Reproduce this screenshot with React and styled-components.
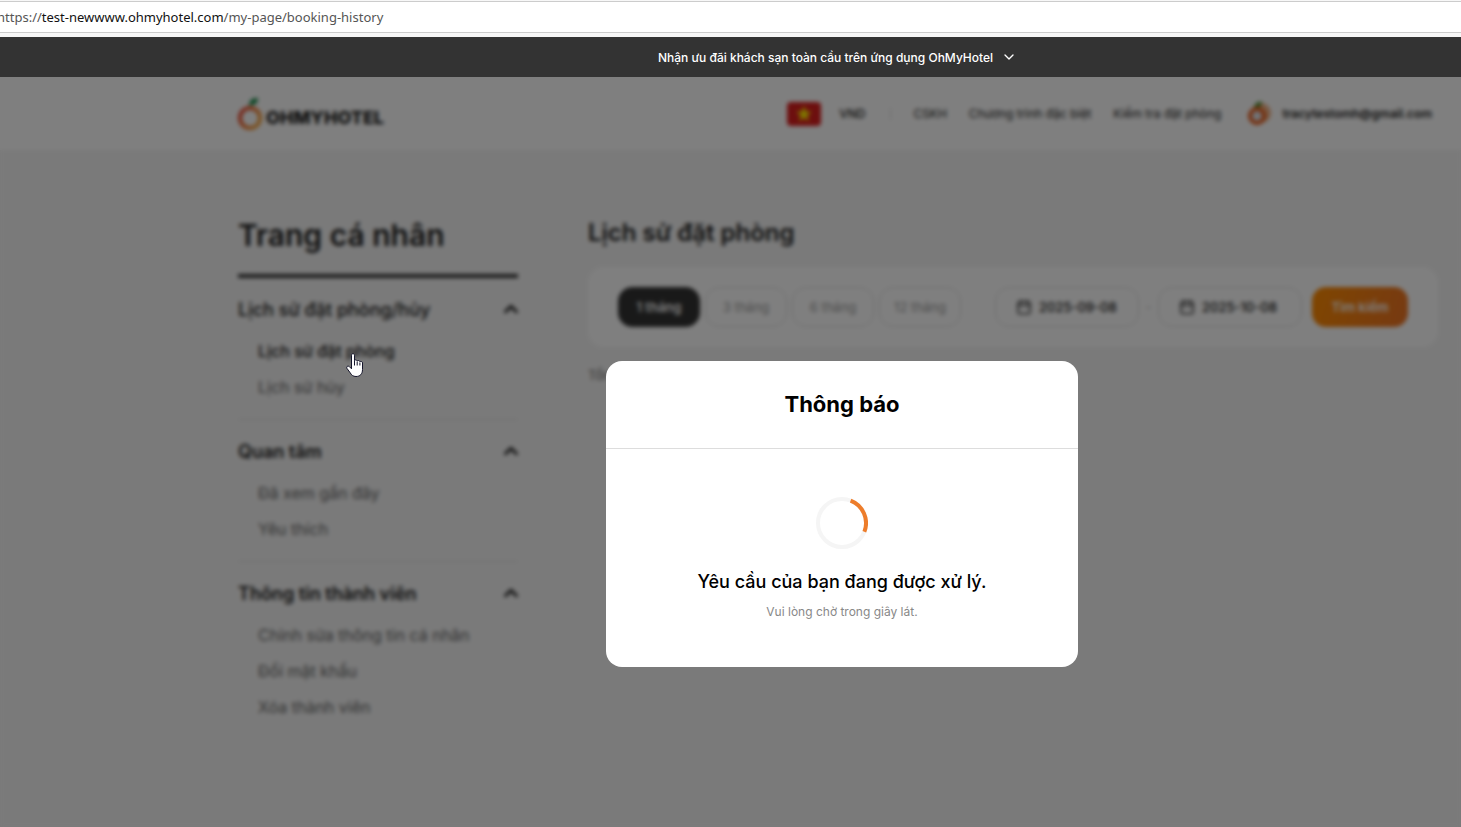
import React from 'react';
import styled, { createGlobalStyle } from "styled-components"
import { Calendar, ChevronDown, ChevronUp } from 'lucide-react'

const periods = ['1 tháng', '3 tháng', '6 tháng', '12 tháng'];

const groups = [
    { title: 'Lịch sử đặt phòng/hủy', items: ['Lịch sử đặt phòng', 'Lịch sử hủy'], open: true },
    { title: 'Quan tâm', items: ['Đã xem gần đây', 'Yêu thích'] },
    { title: 'Thông tin thành viên', items: ['Chỉnh sửa thông tin cá nhân', 'Đổi mật khẩu', 'Xóa thành viên'] },
];

const Logo = () => (
    <svg width="26" height="34" viewBox="0 0 26 34" aria-hidden="true">
        <defs>
            <linearGradient id="ring" x1="0" y1="0" x2="1" y2="0.6">
                <stop offset="0" stopColor="#e8382f" />
                <stop offset="0.55" stopColor="#f0702a" />
                <stop offset="1" stopColor="#f5a23a" />
            </linearGradient>
        </defs>
        <circle cx="12" cy="21" r="10" fill="none" stroke="url(#ring)" strokeWidth="4" />
        <path d="M11 9c0-5 3-8 9-8 0 5-3 7-7 7z" fill="#168a45" />
    </svg>
);

const Avatar = () => (
    <svg width="24" height="26" viewBox="0 0 24 26" aria-hidden="true">
        <circle cx="14" cy="12" r="10" fill="#f0b083" />
        <circle cx="10" cy="15" r="7" fill="#e4e8ee" stroke="#ea5b18" strokeWidth="4" />
        <path d="M7 6c1-4 4-6 8-5 0 4-3 6-8 5z" fill="#4f8a2c" />
    </svg>
);

const Flag = () => (
    <svg width="34" height="24" viewBox="0 0 34 24" aria-hidden="true">
        <rect width="34" height="24" rx="4" fill="#da1e1e" />
        <path d="M17 5l1.700 5.100h5.300l-4.300 3.200 1.600 5.200-4.300-3.200-4.300 3.200 1.600-5.200-4.300-3.200h5.300z" fill="#ffee00" stroke="#ffee00" />
    </svg>
);

const Spinner = () => (
    <svg width="52" height="52" viewBox="0 0 52 52" role="img" aria-label="loading">
        <circle cx="26" cy="26" r="24" fill="none" stroke="#f5f5f5" strokeWidth="4" />
        <circle
            cx="26"
            cy="26"
            r="24"
            fill="none"
            stroke="#ed7d2b"
            strokeWidth="4"
            strokeDasharray="37.700 113.100"
            transform="rotate(-69 26 26)"
        />
    </svg>
);

const App = () => {
    return (
        <Wrapper>
            <GlobalStyle />
            <AddressBar>
                <Address>https://<b>test-newwww.ohmyhotel.com</b>/my-page/booking-history</Address>
            </AddressBar>
            <Banner>
                Nhận ưu đãi khách sạn toàn cầu trên ứng dụng OhMyHotel
                <ChevronDown size={16} strokeWidth={2} />
            </Banner>

            <Stage>
                <Header>
                    <Brand href="#">
                        <Logo />
                        <span>OHMYHOTEL</span>
                    </Brand>
                    <Nav>
                        <Currency type="button"><Flag />VND</Currency>
                        <Separator />
                        <Links>
                            <a href="#">CSKH</a>
                            <a href="#">Chương trình đặc biệt</a>
                            <a href="#">Kiểm tra đặt phòng</a>
                        </Links>
                        <Account href="#"><Avatar />tracytestomh@gmail.com</Account>
                    </Nav>
                </Header>

                <Main>
                    <Sidebar>
                        <PageTitle>Trang cá nhân</PageTitle>
                        {groups.map((group) => (
                            <Group key={group.title}>
                                <GroupButton type="button" $light={group.open}>
                                    {group.title}
                                    <ChevronUp size={22} strokeWidth={3} />
                                </GroupButton>
                                <ul>
                                    {group.items.map((item, i) => (
                                        <li key={item}>
                                            <SideLink href="#" $active={group.open && i === 0}>{item}</SideLink>
                                        </li>
                                    ))}
                                </ul>
                            </Group>
                        ))}
                    </Sidebar>

                    <Content>
                        <SectionTitle>Lịch sử đặt phòng</SectionTitle>
                        <Filter>
                            <Periods>
                                {periods.map((label, i) => (
                                    <Period key={label} type="button" $active={i === 0}>{label}</Period>
                                ))}
                            </Periods>
                            <Dates>
                                <DateField>
                                    <Calendar size={16} strokeWidth={2} />
                                    <input type="text" aria-label="Từ ngày" defaultValue="2025-09-08" />
                                </DateField>
                                <Dash>-</Dash>
                                <DateField>
                                    <Calendar size={16} strokeWidth={2} />
                                    <input type="text" aria-label="Đến ngày" defaultValue="2025-10-08" />
                                </DateField>
                            </Dates>
                            <Search type="button">Tìm kiếm</Search>
                        </Filter>
                        <Total>Tổng</Total>
                    </Content>
                </Main>

                <Overlay>
                    <Modal role="dialog" aria-labelledby="notice">
                        <ModalTitle id="notice">Thông báo</ModalTitle>
                        <ModalBody>
                            <Spinner />
                            <Message>Yêu cầu của bạn đang được xử lý.</Message>
                            <Hint>Vui lòng chờ trong giây lát.</Hint>
                        </ModalBody>
                    </Modal>
                </Overlay>

                <Pointer width="18" height="25" viewBox="0 0 18 25" aria-hidden="true">
                    <path
                        d="M5.500 2.200c0-2 3-2 3 0v5.300c.5-1 2.500-.8 2.700.5.700-.9 2.500-.6 2.700.7.900-.7 2.600-.2 2.600 1.300v6.500c0 4.500-2.500 7-6.500 7-3 0-4.600-1.500-5.800-3.700L.9 15.300c-.9-1.800 1-2.900 2.400-1.700l2.200 2.200z"
                        fill="#fff"
                        stroke="#15152b"
                    />
                    <path d="M8.500 7.500v5M11.200 8.500v4M13.900 9.500v3" stroke="#15152b" />
                </Pointer>
            </Stage>
        </Wrapper>
    );
}

const GlobalStyle = createGlobalStyle`
    * {
        box-sizing: border-box;
    }

    body, h1, h2, p, ul {
        margin: 0;
        padding: 0;
    }

    ul {
        list-style: none;
    }

    a {
        color: inherit;
        text-decoration: none;
    }

    button, input {
        font: inherit;
        color: inherit;
        background: none;
        border: none;
        padding: 0;
    }

    svg {
        flex-shrink: 0;
    }
`

const Wrapper = styled.div`
    display: flex;
    flex-direction: column;
    min-height: 100vh;
    font-family: Inter, "Noto Sans", sans-serif;
    color: #1a1a1a;
    overflow: hidden;
`

const AddressBar = styled.div`
    height: 37px;
    padding-top: 1px;
    background: #f7f7f7;
`

const Address = styled.div`
    height: 32px;
    border-top: 1px solid #ccc;
    border-bottom: 1px solid #ccc;
    background: #fff;
    font-family: "Noto Sans", sans-serif;
    font-size: 13px;
    line-height: 30px;
    text-indent: -3px;
    color: #555;
    white-space: nowrap;

    b {
        font-weight: 400;
        color: #111;
    }
`

const Banner = styled.div`
    display: flex;
    align-items: center;
    justify-content: center;
    gap: 8px;
    height: 40px;
    padding-left: 214px;
    background: #333;
    color: #fff;
    font-size: 12px;
    font-weight: 500;
`

const Stage = styled.div`
    position: relative;
    flex: 1;
    background: #f5f5f5;
`

const Header = styled.header`
    display: flex;
    align-items: center;
    justify-content: space-between;
    height: 73px;
    padding: 0 29px 0 238px;
    background: #fff;
`

const Brand = styled.a`
    display: flex;
    align-items: center;
    gap: 2px;
    font-size: 18px;
    font-weight: 800;
    line-height: 24px;

    span {
        padding-top: 8px;
    }
`

const Nav = styled.nav`
    display: flex;
    align-items: center;
    font-size: 12px;
    white-space: nowrap;
`

const Currency = styled.button`
    display: flex;
    align-items: center;
    gap: 18px;
    font-weight: 500;
`

const Separator = styled.span`
    width: 1px;
    height: 12px;
    margin: 0 22px 0 25px;
    background: #ddd;
`

const Links = styled.div`
    display: flex;
    gap: 22px;
    margin-right: 26px;
`

const Account = styled.a`
    display: flex;
    align-items: center;
    gap: 11px;
    font-weight: 600;
`

const Main = styled.main`
    display: flex;
    gap: 70px;
    padding: 64px 23px 0 238px;
`

const Sidebar = styled.aside`
    flex: 0 0 280px;
`

const PageTitle = styled.h1`
    padding-bottom: 18px;
    border-bottom: 4px solid #333;
    font-size: 30px;
    font-weight: 600;
    line-height: 42px;
`

const Group = styled.section`
    padding: 19px 0 14px;
    border-bottom: 1px solid #ddd;

    &:last-child {
        border-bottom: none;
    }

    ul {
        padding: 12px 0 0 20px;
    }
`

const GroupButton = styled.button`
    display: flex;
    align-items: center;
    justify-content: space-between;
    width: 100%;
    height: 24px;
    font-size: 18px;
    font-weight: ${({ $light }) => ($light ? 500 : 600)};

    svg {
        margin-right: -4px;
    }
`

const SideLink = styled.a`
    display: block;
    font-size: 16px;
    line-height: 36px;
    font-weight: ${({ $active }) => ($active ? 500 : 400)};
    color: ${({ $active }) => ($active ? '#1a1a1a' : '#666')};
`

const Content = styled.section`
    flex: 1;
    min-width: 0;
`

const SectionTitle = styled.h2`
    margin-bottom: 15px;
    font-size: 24px;
    font-weight: 600;
    line-height: 38px;
`

const Filter = styled.div`
    display: flex;
    align-items: center;
    padding: 20px 30px;
    border-radius: 16px;
    background: #fff;
    font-size: 13px;
`

const Periods = styled.div`
    display: flex;
    gap: 5px;
    margin-right: auto;
`

const Period = styled.button`
    width: 82px;
    height: 40px;
    border: 1px solid ${({ $active }) => ($active ? '#333' : '#ddd')};
    border-radius: 14px;
    background: ${({ $active }) => ($active ? '#333' : '#fff')};
    color: ${({ $active }) => ($active ? '#fff' : '#999')};
    font-weight: ${({ $active }) => ($active ? 600 : 400)};
`

const Dates = styled.div`
    display: flex;
    align-items: center;
    margin-right: 10px;
`

const DateField = styled.label`
    display: flex;
    align-items: center;
    gap: 7px;
    width: 144px;
    height: 40px;
    padding: 0 20px;
    border: 1px solid #ddd;
    border-radius: 14px;
    font-weight: 500;

    input {
        width: 100%;
        min-width: 0;
    }
`

const Dash = styled.span`
    width: 19px;
    text-align: center;
    color: #bbb;
`

const Search = styled.button`
    width: 96px;
    height: 40px;
    border-radius: 14px;
    background: linear-gradient(110deg, #ff8c00, #ed7325);
    color: #fff;
    font-weight: 600;
`

const Total = styled.p`
    margin-top: 18px;
    font-size: 13px;
    line-height: 20px;
    color: #666;
`

const Overlay = styled.div`
    position: absolute;
    inset: 0;
    display: flex;
    align-items: flex-start;
    justify-content: center;
    padding: 284px 0 0 223px;
    background: rgba(0, 0, 0, 0.5);
    backdrop-filter: blur(2px);
`

const Modal = styled.div`
    width: 472px;
    border-radius: 16px;
    background: #fff;
    color: #000;
    text-align: center;
`

const ModalTitle = styled.h2`
    padding: 25px 20px 26px;
    border-bottom: 1px solid #ddd;
    font-size: 22px;
    font-weight: 700;
    line-height: 36px;
`

const ModalBody = styled.div`
    padding: 48px 20px 44px;

    svg {
        display: block;
        margin: 0 auto 19px;
    }
`

const Message = styled.p`
    font-size: 18px;
    font-weight: 500;
    line-height: 28px;
`

const Hint = styled.p`
    margin-top: 5px;
    font-size: 12px;
    line-height: 22px;
    color: #888;
`

const Pointer = styled.svg`
    position: absolute;
    left: 346px;
    top: 276px;
    fill: none;
`

export default App;
